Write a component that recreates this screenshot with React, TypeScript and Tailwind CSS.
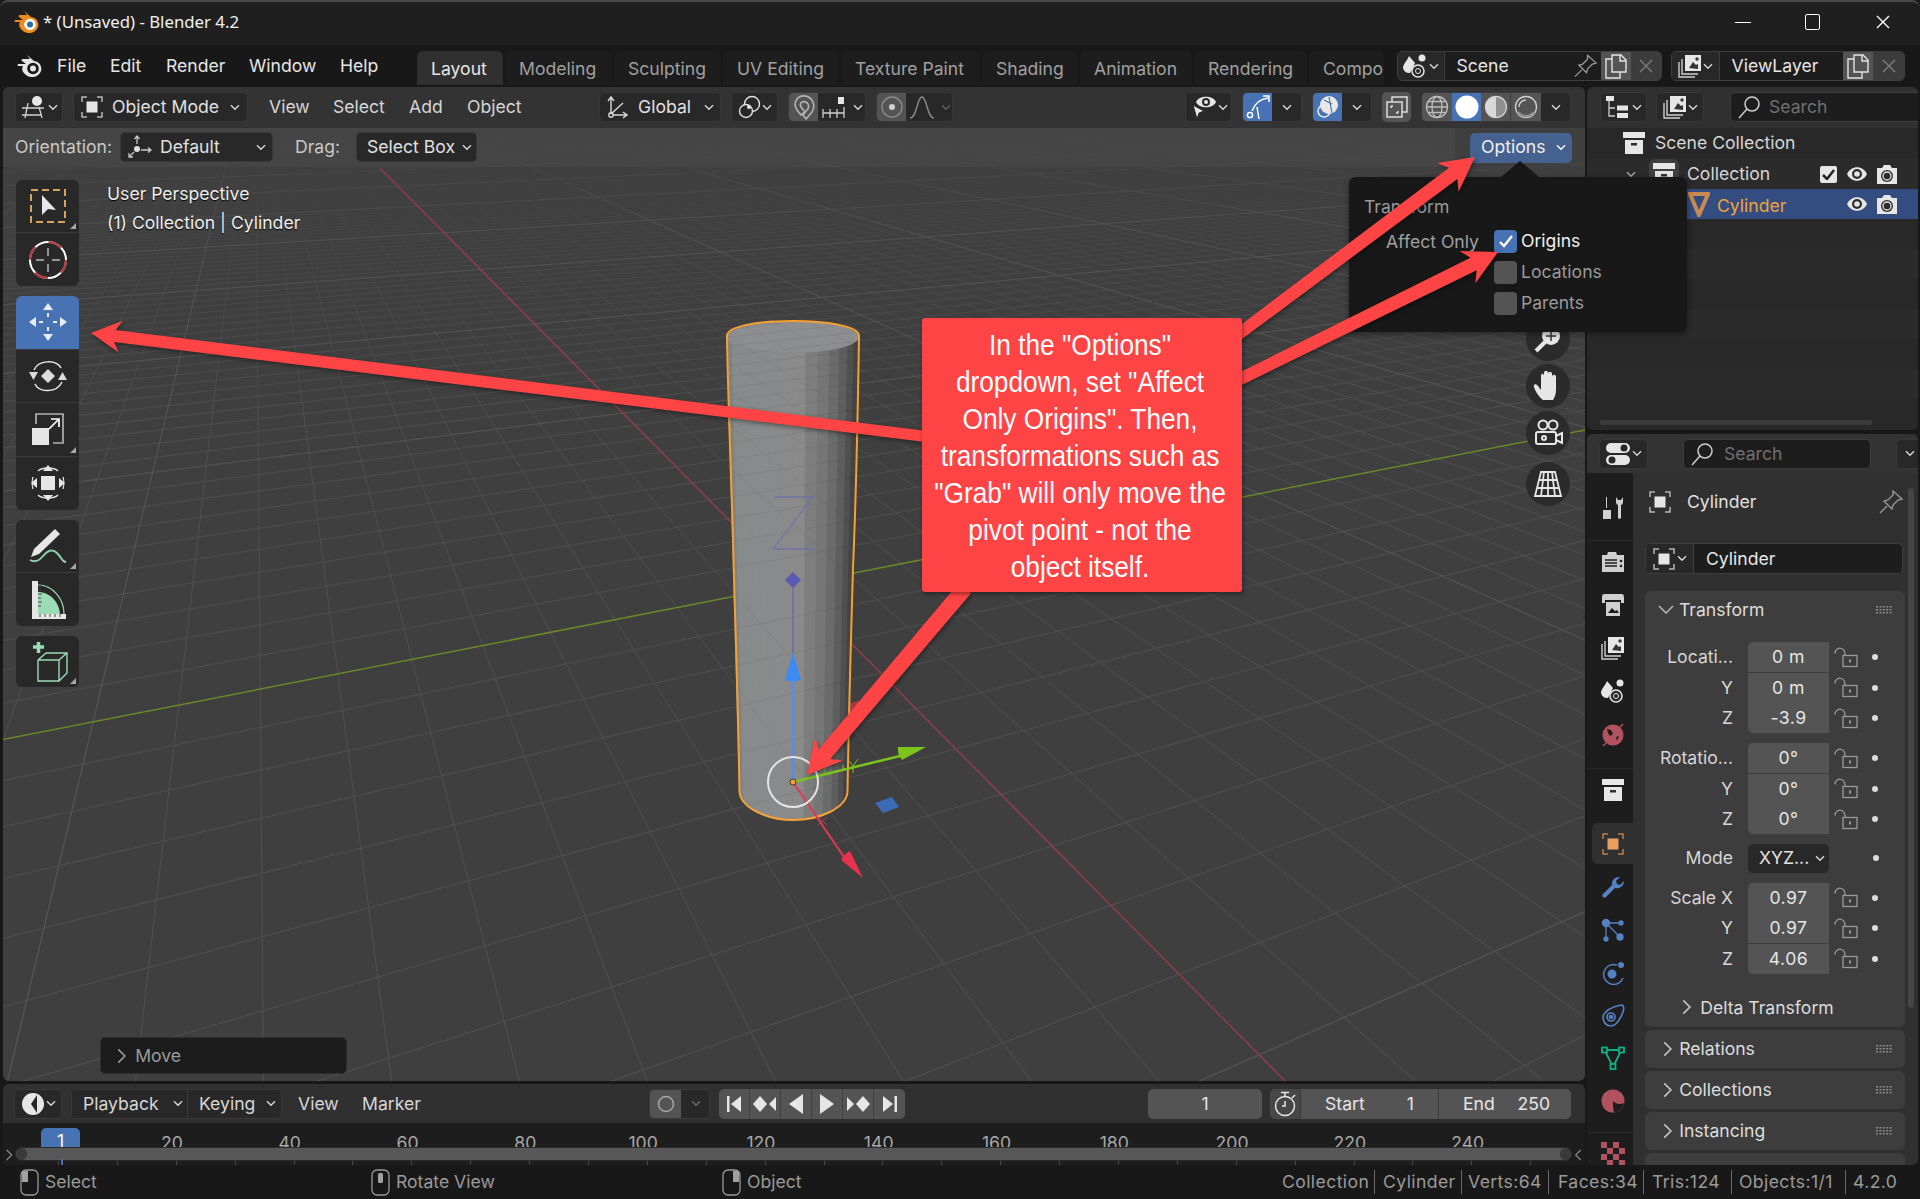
import React from 'react';

const VX = [255, 43], VY = [3563, 43], O = [794, 585], A = 0.0464, B = 0.0202;
const proj = (X: number, Y: number) => {
  const w = 1 + A * X + B * Y;
  return [(A * X * VX[0] + B * Y * VY[0] + O[0]) / w, (A * X * VX[1] + B * Y * VY[1] + O[1]) / w];
};
const lineY = (Y: number) => {
  const p = proj((0.03 - 1 - B * Y) / A, Y), q = proj((60 - 1 - B * Y) / A, Y);
  return `M${p[0].toFixed(1)} ${p[1].toFixed(1)}L${q[0].toFixed(1)} ${q[1].toFixed(1)}`;
};
const lineX = (X: number) => {
  const p = proj(X, (0.03 - 1 - A * X) / B), q = proj(X, (60 - 1 - A * X) / B);
  return `M${p[0].toFixed(1)} ${p[1].toFixed(1)}L${q[0].toFixed(1)} ${q[1].toFixed(1)}`;
};
const gridPath = (step: number, n: number) => {
  let s = '';
  for (let i = -n; i <= n; i += step) {
    if (i === 0) continue;
    s += lineY(i) + lineX(i);
  }
  return s;
};
const GRID1 = gridPath(1, 300);
const GRID10 = gridPath(10, 1200);

const shades = ['#747676', '#808383', '#888b8b', '#888b8b', '#888b8b', '#888b8b', '#888b8b', '#8a8a8a', '#8a8a8a', '#7e7e7e', '#767676', '#6a6c6c', '#5e5e5e', '#505050', '#454345', '#444444'];
const facet = (i: number) => {
  const t0 = Math.PI - (i / 16) * Math.PI, t1 = Math.PI - ((i + 1) / 16) * Math.PI;
  const a = [793 + 66 * Math.cos(t0), 337 + 16 * Math.sin(t0)], b = [793 + 66 * Math.cos(t1), 337 + 16 * Math.sin(t1)];
  const c = [793.5 + 54 * Math.cos(t1), 792 + 28 * Math.sin(t1)], d = [793.5 + 54 * Math.cos(t0), 792 + 28 * Math.sin(t0)];
  return [a, b, c, d].map((p) => p.map((v) => v.toFixed(1)).join(',')).join(' ');
};
const CYL = 'M727 336C727 326 760 321 793 321C826 321 859 326 859 336C858 400 856 500 853 568C851 640 849 700 847.5 792C846 808 820 820 793 820C768 820 741 808 739.5 792C738 700 735 618 733 540C731 470 728 400 727 336Z';

const arrow = (x0: number, y0: number, x1: number, y1: number, w0: number, w1: number, hl: number, hw: number) => {
  const dx = x1 - x0, dy = y1 - y0, l = Math.hypot(dx, dy), ux = dx / l, uy = dy / l, nx = -uy, ny = ux;
  const at = (back: number, off: number) => `${(x1 - ux * back + nx * off).toFixed(1)},${(y1 - uy * back + ny * off).toFixed(1)}`;
  const st = (off: number) => `${(x0 + nx * off).toFixed(1)},${(y0 + ny * off).toFixed(1)}`;
  return [st(w0 / 2), at(hl * 0.8, w1 / 2), at(hl, hw / 2), `${x1},${y1}`, at(hl, -hw / 2), at(hl * 0.8, -w1 / 2), st(-w0 / 2)].join(' ');
};

const L = '#e6e6e6';
const Chev = ({ c = '#d8d8d8' }: { c?: string }) => (
  <svg width="10" height="7" viewBox="0 0 10 7" className="shrink-0"><path d="M1 1.2l4 4 4-4" fill="none" stroke={c} strokeWidth="1.4" /></svg>
);
const ChevR = ({ c = '#c4c4c4', s = 12 }: { c?: string; s?: number }) => (
  <svg width={s * 0.7} height={s} viewBox="0 0 7 12"><path d="M1 1l5 5-5 5" fill="none" stroke={c} strokeWidth="1.2" /></svg>
);
const ObjI = ({ s = 24, c = L, b = '#b5b5b5' }: { s?: number; c?: string; b?: string }) => (
  <svg width={s} height={s} viewBox="0 0 24 24" className="shrink-0">
    <rect x="6.5" y="6.5" width="11" height="11" fill={c} />
    <path d="M2 7V2h5M17 2h5v5M22 17v5h-5M7 22H2v-5" fill="none" stroke={b} strokeWidth="1.5" />
  </svg>
);
const View3DI = () => (
  <svg width="28" height="24" viewBox="0 0 28 24"><circle cx="17" cy="6" r="5" fill={L} /><path d="M2 13h22M2 20h20M8 8l-3 15M19 12l3 11" stroke="#cfcfcf" strokeWidth="1.3" fill="none" /></svg>
);
const GlobalI = () => (
  <svg width="24" height="24" viewBox="0 0 24 24" fill="none" stroke="#d8d8d8" strokeWidth="1.4"><path d="M5 19V3M2 6l3-4 3 4M5 19L17 8M7 20h13M17 17l4 3-4 3" /><circle cx="5" cy="20" r="2.2" /></svg>
);
const LinkI = () => (
  <svg width="24" height="24" viewBox="0 0 24 24" fill="none" stroke="#e0e0e0" strokeWidth="1.4"><circle cx="15" cy="9" r="7.5" /><circle cx="9" cy="16" r="6.5" fill="#282828" /><circle cx="12" cy="12" r="2" fill={L} stroke="none" /></svg>
);
const MagnetI = () => (
  <svg width="24" height="26" viewBox="0 0 24 26" fill="none" stroke="#b4b4b4" strokeWidth="1.600" strokeLinejoin="round"><path d="M14 25l6-7c3-5 2-11-2-14S8 1 5 5s-2 8 0 11l4 5 4-3-4-5c-1-2-1-4 1-5s5 0 6 2 1 4-1 6l-4 5z" /></svg>
);
const SnapI = () => (
  <svg width="26" height="24" viewBox="0 0 26 24"><rect x="17" y="2" width="6" height="7" fill={L} /><path d="M2 14v9M9 14v9M16 14v9M23 12v11M2 18h21" stroke="#cfcfcf" strokeWidth="1.3" fill="none" /></svg>
);
const PropI = () => (
  <svg width="24" height="24" viewBox="0 0 24 24" fill="none"><circle cx="12" cy="12" r="10" stroke="#8a8a8a" strokeWidth="1.4" /><circle cx="12" cy="12" r="3" fill="#cfcfcf" /></svg>
);
const FalloffI = () => (
  <svg width="26" height="24" viewBox="0 0 26 24" fill="none" stroke="#8c8c8c" strokeWidth="1.4"><path d="M1 23c7 0 7-21 12-21s5 21 12 21" /></svg>
);
const VisI = () => (
  <svg width="28" height="28" viewBox="0 0 28 28"><path d="M6 9c3-7 17-7 20 0-3 7-17 7-20 0z" fill={L} /><circle cx="16" cy="9" r="4" fill="#282828" /><circle cx="16" cy="9" r="2" fill={L} /><path d="M3 12l11 6-5 2-2 6z" fill={L} stroke="#282828" /></svg>
);
const GizmoI = () => (
  <svg width="26" height="26" viewBox="0 0 26 26" fill="none" stroke="#fff" strokeWidth="1.5"><path d="M7 17C10 9 15 5 23 4M18 2h6v6" /><circle cx="5" cy="21" r="2.6" /><path d="M12 13l2 12" /></svg>
);
const OverlayI = () => (
  <svg width="26" height="26" viewBox="0 0 26 26"><circle cx="14" cy="11" r="9" fill="#e8e8e8" /><circle cx="9" cy="17" r="6" fill="none" stroke="#e8e8e8" strokeWidth="1.6" /><path d="M14 3l3 16M9 6l8 4" stroke="#4772b3" strokeWidth="1.2" /></svg>
);
const XrayI = () => (
  <svg width="24" height="24" viewBox="0 0 24 24" fill="none" stroke="#dcdcdc" strokeWidth="1.5"><rect x="2" y="7" width="15" height="15" /><path d="M7 7V2h15v15h-5" /><path d="M6 11v2M6 11h2M13 18h-2M13 18v-2" /></svg>
);
const ShadeI = ({ k }: { k: number }) => (
  <svg width="24" height="24" viewBox="0 0 24 24" fill="none">
    {k === 0 && <g stroke="#bdbdbd" strokeWidth="1.3"><circle cx="12" cy="12" r="10.5" /><ellipse cx="12" cy="12" rx="5" ry="10.5" /><path d="M1.5 12h21M3 6.5h18M3 17.5h18" /></g>}
    {k === 1 && <circle cx="12" cy="12" r="11.5" fill="#fff" />}
    {k === 2 && <g><circle cx="12" cy="12" r="10.5" fill="#8f8f8f" stroke="#d0d0d0" strokeWidth="1.3" /><path d="M12 1.5a10.5 10.5 0 0 0 0 21z" fill="#d8d8d8" /></g>}
    {k === 3 && <g><circle cx="12" cy="12" r="10.5" stroke="#cfcfcf" strokeWidth="1.3" /><path d="M5 12a7 7 0 0 1 7-7" stroke="#cfcfcf" strokeWidth="1.5" /><path d="M4 17a10 10 0 0 0 16 0" stroke="#8f8f8f" strokeWidth="2.5" /></g>}
  </svg>
);
const OrientI = () => (
  <svg width="26" height="26" viewBox="0 0 26 26" fill="none" stroke="#c8c8c8" strokeWidth="1.3"><circle cx="10" cy="15" r="3" fill="#e0e0e0" stroke="none" /><path d="M10 10V2M7.5 5L10 2l2.500 3M14 16h10M21 13.500l3 2.500-3 2.500M7 18l-5 5M2 19v4h4" /></svg>
);
const OutlinerI = () => (
  <svg width="26" height="24" viewBox="0 0 26 24"><rect x="1" y="1" width="8" height="5" fill={L} /><path d="M4 6v15h6M4 13h6" stroke="#cfcfcf" strokeWidth="1.3" fill="none" /><rect x="12" y="10.500" width="11" height="5" fill={L} /><rect x="12" y="18" width="11" height="5" fill={L} /></svg>
);
const LayerI = () => (
  <svg width="24" height="24" viewBox="0 0 24 24" fill="none"><rect x="7" y="1" width="16" height="16" fill={L} /><path d="M11 14l4-6 3 3 2-1v5z" fill="#333" /><circle cx="19" cy="5" r="1.700" fill="#333" /><path d="M4 5v15h16M1 8v15h16" stroke="#cfcfcf" strokeWidth="1.4" /></svg>
);
const SearchI = () => (
  <svg width="24" height="24" viewBox="0 0 24 24" fill="none" stroke="#cfcfcf" strokeWidth="1.5"><circle cx="15" cy="9" r="7" /><path d="M10 14L2 23" /></svg>
);
const SceneI = () => (
  <svg width="26" height="26" viewBox="0 0 26 26"><path d="M7 3c-2 5-6 8-6 12a6 6 0 0 0 7 5l5-10z" fill={L} /><circle cx="20" cy="5" r="3.500" fill={L} /><circle cx="16" cy="18" r="6" fill="#282828" stroke={L} strokeWidth="1.500" /><circle cx="16" cy="18" r="2.500" fill="none" stroke={L} /></svg>
);
const PinI = ({ c = '#9a9a9a' }: { c?: string }) => (
  <svg width="24" height="24" viewBox="0 0 24 24" fill="none" stroke={c} strokeWidth="1.3"><path d="M14 1l9 8-4 1-5 5-1 4-8-8 4-1 5-5zM8 16l-7 7" /></svg>
);
const CopyI = () => (
  <svg width="22" height="26" viewBox="0 0 22 26" fill="none" stroke="#e4e4e4" strokeWidth="1.4"><path d="M7 19V2h9l5 5v12zM15 2v6h6M7 6H1v19h14v-6" /></svg>
);
const XI = ({ c = '#7d7d7d' }: { c?: string }) => (
  <svg width="14" height="14" viewBox="0 0 14 14" fill="none" stroke={c} strokeWidth="1.4"><path d="M1 1l12 12M13 1L1 13" /></svg>
);
const ArchiveI = ({ s = 24 }: { s?: number }) => (
  <svg width={s} height={s} viewBox="0 0 24 24"><rect x="1" y="1" width="22" height="6" fill={L} /><path d="M3 9h18v14H3z" fill={L} /><rect x="9" y="12" width="6" height="2.500" fill="#2c2c2c" /></svg>
);
const EyeI = () => (
  <svg width="22" height="16" viewBox="0 0 22 16"><path d="M1 8c4-9 16-9 20 0-4 9-16 9-20 0z" fill={L} /><circle cx="11" cy="8" r="5" fill="#2c2c2c" /><circle cx="11" cy="8" r="2.800" fill={L} /></svg>
);
const CamI = () => (
  <svg width="22" height="22" viewBox="0 0 22 22"><path d="M1 5h5l2-3h6l2 3h5v16H1z" fill={L} /><circle cx="11" cy="13" r="6" fill="#2c2c2c" /><circle cx="11" cy="13" r="4" fill="none" stroke={L} strokeWidth="1.300" /></svg>
);
const MeshTri = () => (
  <svg width="22" height="26" viewBox="0 0 22 26"><path d="M2 3h18L11 24z" fill="#334d80" stroke="#c98a50" strokeWidth="4" /></svg>
);
const LockI = () => (
  <svg width="24" height="21" viewBox="0 0 24 21" fill="none" stroke="#9a9a9a" strokeWidth="1.3" className="shrink-0"><path d="M1 6.500C1 2 5 .5 7.500 1.500S11 5 11 8" /><rect x="9" y="8.500" width="14" height="11" /><rect x="15" y="12.500" width="2" height="3" fill="#9a9a9a" stroke="none" /></svg>
);
const Dots = () => (
  <svg width="16" height="8" viewBox="0 0 16 8" className="shrink-0"><g fill="#8a8a8a">{[0, 3.4, 6.8, 10.2, 13.6].flatMap((x) => [0, 3, 6].map((y) => <rect key={`${x}-${y}`} x={x} y={y} width="2" height="1.500" />))}</g></svg>
);
const Corner = () => (
  <svg width="6" height="6" viewBox="0 0 6 6" className="absolute right-[3px] bottom-[3px]"><path d="M6 0v6H0z" fill="#a8a8a8" /></svg>
);
const Logo = ({ c = L, inner = '#181818', dot = L }: { c?: string; inner?: string; dot?: string }) => (
  <svg width="26" height="24" viewBox="0 0 26 24"><path d="M10 1l7 6C24 8 25 14 24 17c-2 6-10 8-15 4S5 14 6 12L1 12c-1-1 0-2 1-2h7L5 7c-1-1 0-2 1-2h7z" fill={c} /><circle cx="16" cy="14.500" r="5.800" fill={inner} /><circle cx="16" cy="14.500" r="3" fill={dot} /></svg>
);
const ClockI = () => (
  <svg width="24" height="24" viewBox="0 0 24 24"><circle cx="12" cy="12" r="11" fill={L} /><path d="M16 3l-6 9 6 9z" fill="#282828" /></svg>
);
const Mouse = ({ k }: { k: number }) => (
  <svg width="20" height="27" viewBox="0 0 20 27" fill="none"><rect x="1" y="1" width="17" height="25" rx="5" stroke="#9a9a9a" strokeWidth="1.300" />
    {k === 0 && <path d="M2 2h6v11H2z" fill="#a0a0a0" />}{k === 1 && <rect x="7" y="4" width="5" height="10" rx="1.500" fill="#a0a0a0" />}{k === 2 && <path d="M11 2h6v11h-6z" fill="#a0a0a0" />}
  </svg>
);

const tabs: [string, string][] = [['Modeling', 'w-[107px]'], ['Sculpting', 'w-[107px]'], ['UV Editing', 'w-[116px]'], ['Texture Paint', 'w-[139px]'], ['Shading', 'w-[96px]'], ['Animation', 'w-[112px]'], ['Rendering', 'w-[113px]']];

function TitleBar() {
  return (
    <div className="h-[45px] shrink-0 bg-[#1f1f1f] border-t-2 border-[#4a4a4a] rounded-t-[8px] flex items-center pb-[3px] text-[16.800px] text-[#f0f0f0] [font-family:'Noto_Sans',sans-serif]">
      <div className="ml-[14px] w-[29px]"><Logo c="#f08a1d" inner="#fff" dot="#2a6ca8" /></div>
      <span>* (Unsaved) - Blender 4.2</span>
      <div className="ml-auto flex items-center">
        <div className="w-[68px] flex justify-center"><div className="w-[16px] h-px bg-white" /></div>
        <div className="w-[70px] flex justify-center"><div className="w-[15px] h-[16px] border-[1.5px] border-white rounded-[2px]" /></div>
        <div className="w-[72px] flex justify-center"><XI c="#fff" /></div>
        <div className="w-[1px]" />
      </div>
    </div>
  );
}

function MenuBar() {
  return (
    <div className="h-[42px] shrink-0 bg-[#181818] flex items-center text-[#e6e6e6]">
      <div className="w-[57px] pl-[17px]"><Logo /></div>
      <span className="w-[53px]">File</span>
      <span className="w-[56px]">Edit</span>
      <span className="w-[83px]">Render</span>
      <span className="w-[91px]">Window</span>
      <span className="w-[77px]">Help</span>
      <div className="self-end h-[34px] flex gap-[2px] mb-[2px]">
        <div className="w-[86px] pl-[14px] pt-[2px] bg-[#303030] rounded-t-[6px] flex items-center">Layout</div>
        {tabs.map(([t, w]) => (
          <div key={t} className={w + ' pl-[14px] pt-[2px] bg-[#1d1d1d] rounded-t-[6px] flex items-center text-[#a0a0a0]'}>{t}</div>
        ))}
        <div className="w-[75px] pl-[14px] pt-[2px] bg-[#1d1d1d] rounded-t-[6px] flex items-center text-[#a0a0a0] overflow-hidden">Compo</div>
      </div>
      <div className="ml-[13px] w-[265px] h-[30px] flex items-center rounded-[5px] border border-[#3d3d3d] bg-[#1d1d1d] overflow-hidden">
        <div className="w-[48px] h-full flex items-center justify-center gap-[1px] bg-[#282828] border-r border-[#3d3d3d]"><SceneI /><Chev /></div>
        <span className="ml-[12px] w-[121px]">Scene</span>
        <PinI />
        <div className="ml-[4px] w-[31px] h-full bg-[#545454] flex items-center justify-center"><CopyI /></div>
        <div className="w-[31px] h-full bg-[#3c3c3c] flex items-center justify-center"><XI /></div>
      </div>
      <div className="ml-[9px] w-[234px] h-[30px] flex items-center rounded-[5px] border border-[#3d3d3d] bg-[#1d1d1d] overflow-hidden">
        <div className="w-[48px] h-full flex items-center justify-center gap-[1px] bg-[#282828] border-r border-[#3d3d3d]"><LayerI /><Chev /></div>
        <span className="ml-[12px] w-[112px]">ViewLayer</span>
        <div className="w-[31px] h-full bg-[#545454] flex items-center justify-center"><CopyI /></div>
        <div className="w-[31px] h-full bg-[#3c3c3c] flex items-center justify-center"><XI /></div>
      </div>
    </div>
  );
}

const btn = 'h-[30px] flex items-center rounded-[5px] bg-[#282828] border border-[#383838] shrink-0';

function ViewportHeader() {
  return (
    <div className="h-[41px] shrink-0 bg-[#333333] flex items-center pl-[12px] pb-[1px] text-[#d6d6d6] relative">
      <div className={btn + ' w-[48px] justify-center'}><View3DI /><Chev /></div>
      <div className={btn + ' ml-[10px] w-[175px] pl-[6px]'}><ObjI /><span className="ml-[8px] text-[#e0e0e0] whitespace-nowrap">Object Mode</span><span className="ml-auto mr-[7px]"><Chev /></span></div>
      <span className="ml-[21px] w-[64px]">View</span>
      <span className="w-[76px]">Select</span>
      <span className="w-[58px]">Add</span>
      <span className="w-[132px]">Object</span>
      <div className={btn + ' w-[122px] pl-[6px]'}><GlobalI /><span className="ml-[8px] text-[#e0e0e0]">Global</span><span className="ml-auto mr-[6px]"><Chev /></span></div>
      <div className={btn + ' ml-[10px] w-[47px] justify-center gap-[1px]'}><LinkI /><Chev /></div>
      <div className={btn + ' ml-[10px] w-[78px] overflow-hidden'}><div className="w-[29px] h-full bg-[#545454] flex items-center justify-center"><MagnetI /></div><div className="ml-[3px]"><SnapI /></div><span className="ml-[6px]"><Chev /></span></div>
      <div className={btn + ' ml-[10px] w-[77px] overflow-hidden'}><div className="w-[29px] h-full bg-[#545454] flex items-center justify-center"><PropI /></div><div className="ml-[3px]"><FalloffI /></div><span className="ml-[6px]"><Chev c="#5d5d5d" /></span></div>
      <div className={btn + ' ml-[232px] w-[47px] justify-center'}><VisI /><Chev /></div>
      <div className={btn + ' ml-[10px] w-[60px] overflow-hidden'}><div className="w-[29px] h-full bg-[#4772b3] flex items-center justify-center"><GizmoI /></div><span className="ml-[10px]"><Chev /></span></div>
      <div className={btn + ' ml-[10px] w-[60px] overflow-hidden'}><div className="w-[29px] h-full bg-[#4772b3] flex items-center justify-center"><OverlayI /></div><span className="ml-[10px]"><Chev /></span></div>
      <div className="ml-[10px] w-[29px] h-[30px] rounded-[5px] bg-[#545454] flex items-center justify-center"><XrayI /></div>
      <div className={btn + ' ml-[10px] w-[150px] overflow-hidden'}>
        <div className="w-[30px] h-full bg-[#545454] flex items-center justify-center"><ShadeI k={0} /></div>
        <div className="w-[29px] h-full bg-[#4772b3] flex items-center justify-center"><ShadeI k={1} /></div>
        <div className="w-[30px] h-full bg-[#545454] flex items-center justify-center border-r border-[#3d3d3d]"><ShadeI k={2} /></div>
        <div className="w-[30px] h-full bg-[#545454] flex items-center justify-center"><ShadeI k={3} /></div>
        <span className="ml-[10px]"><Chev /></span>
      </div>
    </div>
  );
}

function ToolSettings() {
  return (
    <div className="h-[39px] shrink-0 flex items-center">
      <div className="w-[1452px] h-full bg-[#ffffff08] rounded-br-[8px] flex items-center pl-[12px] pb-[1px]">
        <span className="w-[105px] text-[#c8c8c8]">Orientation:</span>
        <div className={btn + ' w-[153px] pl-[6px]'}><OrientI /><span className="ml-[7px] text-[#e0e0e0]">Default</span><span className="ml-auto mr-[6px]"><Chev /></span></div>
        <span className="ml-[22px] w-[61px] text-[#c8c8c8]">Drag:</span>
        <div className={btn + ' w-[121px] pl-[10px] bg-[#2a2a2a]'}><span className="text-[#e0e0e0] whitespace-nowrap">Select Box</span><span className="ml-auto mr-[4px]"><Chev /></span></div>
      </div>
      <div className="ml-[15px] w-[102px] h-[30px] rounded-[5px] bg-[#44618f] flex items-center pl-[11px] pb-[1px] text-[#f0f0f0]">Options<span className="ml-auto mr-[6px]"><Chev c="#fff" /></span></div>
    </div>
  );
}

const Tool = ({ children, active, corner, cls }: { children: React.ReactNode; active?: boolean; corner?: boolean; cls: string }) => (
  <div className={'relative flex items-center justify-center border-b border-[#3a3a3a] last:border-b-0 ' + cls + (active ? ' bg-[#4772b3]' : ' bg-[#282828]')}>
    {children}
    {corner && <Corner />}
  </div>
);

function Tools() {
  return (
    <div className="ml-[13px] mt-[13px] w-[63px] flex flex-col gap-[10px] shrink-0">
      <div className="rounded-[6px] overflow-hidden">
        <Tool cls="h-[53px]" corner>
          <svg width="40" height="40" viewBox="0 0 40 40" fill="none"><rect x="3" y="4" width="34" height="32" stroke="#d3a65c" strokeWidth="2" strokeDasharray="7 4" /><path d="M14 9l14 15-8-1-6 6z" fill={L} /></svg>
        </Tool>
        <Tool cls="h-[53px]">
          <svg width="40" height="40" viewBox="0 0 40 40" fill="none"><circle cx="20" cy="20" r="18" stroke="#fff" strokeWidth="2" /><circle cx="20" cy="20" r="18" stroke="#b03a3f" strokeWidth="2.200" strokeDasharray="14 14.300" /><path d="M20 8v8M20 24v8M8 20h8M24 20h8" stroke="#b8b8b8" strokeWidth="1.500" /></svg>
        </Tool>
      </div>
      <div className="rounded-[6px] overflow-hidden">
        <Tool cls="h-[53.500px]" active>
          <svg width="40" height="40" viewBox="0 0 40 40" fill="#e8ecf4"><path d="M20 1l5 7H15zM20 39l-5-7h10zM1 20l7-5v10zM39 20l-7 5V15z" /><path d="M20 11v4M20 25v4M11 20h4M25 20h4" stroke="#e8ecf4" strokeWidth="2" /></svg>
        </Tool>
        <Tool cls="h-[53.500px]">
          <svg width="40" height="36" viewBox="0 0 40 36" fill="none"><path d="M6 12C10 2 28 1 33 10M34 24C29 35 11 35 7 26" stroke={L} strokeWidth="1.500" /><path d="M20 11l7 7-7 7-7-7zM1 14h9l-4.500 8zM30 22h9l-4.500-8z" fill="#dcdcdc" /></svg>
        </Tool>
        <Tool cls="h-[53.500px]" corner>
          <svg width="34" height="34" viewBox="0 0 34 34" fill="none"><rect x="1" y="16" width="17" height="17" fill={L} /><path d="M5 12V2h27v29H22" stroke="#b0b0b0" strokeWidth="1.700" /><path d="M18 17l9-9M20 7h8v8" stroke="#fff" strokeWidth="1.700" /></svg>
        </Tool>
        <Tool cls="h-[53.500px]">
          <svg width="36" height="38" viewBox="0 0 36 38" fill="none"><rect x="11" y="12" width="14" height="14" fill={L} /><path d="M18 1l5 6H13zM18 37l-5-6h10zM1 19l6-5v10zM35 19l-6 5V14z" fill={L} /><path d="M8 7C12 3 24 3 28 7M8 31C12 35 24 35 28 31M3 13c-1 3-1 9 0 12M33 13c1 3 1 9 0 12" stroke={L} strokeWidth="1.300" /></svg>
        </Tool>
      </div>
      <div className="rounded-[6px] overflow-hidden">
        <Tool cls="h-[53px]" corner>
          <svg width="42" height="38" viewBox="0 0 42 38" fill="none"><path d="M28 2l5 5-21 20-8 3 3-8z" fill={L} /><path d="M3 33c5 3 9 1 13-4s9-8 14-3 5 9 9 9" stroke="#8fd0a8" strokeWidth="2" /></svg>
        </Tool>
        <Tool cls="h-[53px]">
          <svg width="36" height="40" viewBox="0 0 36 40" fill="none"><path d="M8 12c12 0 21 10 22 22H8z" fill="#9bdcb4" /><path d="M8 5c15 0 26 14 26 29" stroke="#9bdcb4" strokeWidth="1.200" /><path d="M2 1h6v38H2zM2 34h34v5H2z" fill={L} /><path d="M8 6h4M8 10h3M8 14h4M8 18h3M8 22h4M8 26h3M10 34v3M15 34v3M20 34v3M25 34v3M30 34v3" stroke="#444" /></svg>
        </Tool>
      </div>
      <div className="rounded-[6px] overflow-hidden">
        <Tool cls="h-[51px]" corner>
          <svg width="42" height="42" viewBox="0 0 42 42" fill="none"><path d="M6 6h11M11.500 1v11" stroke="#9bdcb4" strokeWidth="3.500" /><path d="M11 19l8-7h21v20l-8 8H11zM11 19h21v21M32 19l8-7" stroke="#9bdcb4" strokeWidth="1.400" /></svg>
        </Tool>
      </div>
    </div>
  );
}

function Scene3D() {
  return (
    <svg className="absolute inset-0 w-full h-full" viewBox="3 87 1582 994" fill="none" preserveAspectRatio="none">
      <defs>
        <linearGradient id="g1" gradientUnits="userSpaceOnUse" x1="0" y1="87" x2="0" y2="1082">
          <stop offset="0.08" stopColor="#4d4d4d" stopOpacity="0" />
          <stop offset="0.18" stopColor="#4d4d4d" stopOpacity="0.55" />
          <stop offset="0.32" stopColor="#4e4e4e" stopOpacity="0.95" />
          <stop offset="1" stopColor="#515151" stopOpacity="1" />
        </linearGradient>
        <linearGradient id="g10" gradientUnits="userSpaceOnUse" x1="0" y1="87" x2="0" y2="1082">
          <stop offset="0.05" stopColor="#555555" stopOpacity="0" />
          <stop offset="0.14" stopColor="#555555" stopOpacity="0.7" />
          <stop offset="1" stopColor="#555555" stopOpacity="1" />
        </linearGradient>
        <clipPath id="cyl"><path d={CYL} /></clipPath>
      </defs>
      <path d={GRID1} stroke="url(#g1)" strokeWidth="1" />
      <path d={GRID10} stroke="url(#g10)" strokeWidth="1" />
      <path d="M380 168L1286 1082" stroke="#8f3d47" strokeWidth="1.500" />
      <path d="M0 740L1590 429" stroke="#68892a" strokeWidth="1.500" />
      <path d="M848 704L868 698L848 720z" fill="#a83c4a" />
      {shades.map((c, i) => <polygon key={i} points={facet(i)} fill={c} stroke={c} strokeWidth="1" />)}
      <ellipse cx="793" cy="337" rx="66" ry="16" fill="#8d8e8f" />
      <path d={GRID1} stroke="#000" strokeOpacity="0.06" clipPath="url(#cyl)" />
      <path d={CYL} stroke="#f5a033" strokeWidth="2" />
      <path d="M774 497h39L773 549h40" stroke="#6767b8" strokeWidth="1" />
      <path d="M785 580l8-8 8 8-8 8z" fill="#5a5ab4" />
      <path d="M793 588V652" stroke="#6060a8" strokeWidth="1" />
      <path d="M793 652l8 28q-8 3-16 0z" fill="#3d8bf0" />
      <path d="M793 680V780" stroke="#4d8ff5" strokeWidth="2.500" />
      <path d="M793 782L900 756" stroke="#7cc31c" strokeWidth="2.500" />
      <path d="M898 747L926 747L902 760q-5-6-4-13z" fill="#7cc31c" />
      <path d="M849 761l4 5 5-7M853 766v7M825 768v6M843 765v6" stroke="#7cc31c" strokeWidth="1" />
      <path d="M793 782L846 860" stroke="#e5384f" strokeWidth="2" />
      <path d="M863 878L841 860q3-6 9-9z" fill="#e8304f" />
      <path d="M818 825l9-8M818 817l9 8" stroke="#a8485a" />
      <path d="M875 803L892 797L899 807L883 813z" fill="#3a6cb5" />
      <circle cx="793" cy="782" r="25" stroke="#e4e4e4" strokeWidth="2" />
      <circle cx="793" cy="782" r="3" fill="#f5a033" stroke="#222" strokeWidth="0.800" />
    </svg>
  );
}

const Nav = ({ children, cls }: { children: React.ReactNode; cls: string }) => (
  <div className={'w-[44px] h-[44px] rounded-full bg-[#2b2b2b] flex items-center justify-center ' + cls}>{children}</div>
);

function Viewport() {
  return (
    <div className="relative flex-1 min-h-0 rounded-[6px] overflow-hidden bg-[#3f3f3f] flex flex-col">
      <Scene3D />
      <div className="relative flex flex-col flex-1 min-h-0">
        <ViewportHeader />
        <ToolSettings />
        <div className="flex">
          <Tools />
          <div className="ml-[28px] mt-[12px] text-[#f0f0f0] [text-shadow:0_1px_1px_#000] leading-[29px]">
            <div>User Perspective</div>
            <div>(1) Collection | Cylinder</div>
          </div>
        </div>
        <div className="absolute right-[15px] top-[230px] flex flex-col gap-[3px]">
          <Nav cls=""><svg width="30" height="30" viewBox="0 0 30 30"><circle cx="18" cy="12" r="9" fill={L} /><path d="M12 18L3 27" stroke={L} strokeWidth="4" /><path d="M18 7v10M13 12h10" stroke="#333" strokeWidth="1.500" /></svg></Nav>
          <Nav cls=""><svg width="30" height="32" viewBox="0 0 30 32" fill={L}><path d="M10 30c-4-3-8-9-9-13-1-3 2-4 4-1l3 4V6c0-3 3-3 3 0v6V3c0-3 4-3 4 0v9V4c0-3 4-3 4 0v9-6c0-3 4-3 4 0v13c0 5-2 8-3 10z" /></svg></Nav>
          <Nav cls=""><svg width="30" height="28" viewBox="0 0 30 28" fill="none" stroke={L} strokeWidth="2"><circle cx="10" cy="6" r="4.500" /><circle cx="20" cy="6" r="4.500" /><rect x="3" y="13" width="20" height="12" rx="2" /><path d="M23 17l6-3v10l-6-3" /><circle cx="11" cy="19" r="2" /></svg></Nav>
          <Nav cls="mt-[4px]"><svg width="30" height="28" viewBox="0 0 30 28" fill="none" stroke={L} strokeWidth="1.800"><path d="M8 2h14l6 24H2zM5.500 10h19M3.500 18h23M15 2v24M11 2L8 26M19 2l3 24" /></svg></Nav>
        </div>
        <div className="absolute left-[97px] bottom-[7px] w-[247px] h-[37px] rounded-[5px] bg-[#1c1c1c] border border-[#2e2e2e] flex items-center pl-[15px] text-[#9a9a9a]">
          <ChevR c="#9a9a9a" s={16} /><span className="ml-[8px]">Move</span>
        </div>
      </div>
    </div>
  );
}

const Cell = ({ children, w = 'w-[31px]' }: { children: React.ReactNode; w?: string }) => (
  <div className={w + ' h-full bg-[#545454] flex items-center justify-center border-r border-[#404040] last:border-r-0'}>{children}</div>
);

function Timeline() {
  const nums = [20, 40, 60, 80, 100, 120, 140, 160, 180, 200, 220, 240];
  return (
    <div className="h-[81px] shrink-0 mt-[3px] flex flex-col">
      <div className="h-[39px] bg-[#303030] rounded-t-[6px] flex items-center pl-[11px] text-[#d6d6d6]">
        <div className={btn + ' w-[48px] justify-center gap-[1px]'}><ClockI /><Chev /></div>
        <div className={btn + ' ml-[9px] w-[211px]'}>
          <div className="w-[116px] h-full flex items-center pl-[11px] border-r border-[#3d3d3d]">Playback<span className="ml-auto mr-[4px]"><Chev /></span></div>
          <div className="flex-1 h-full flex items-center pl-[11px]">Keying<span className="ml-auto mr-[5px]"><Chev /></span></div>
        </div>
        <span className="ml-[16px] w-[64px]">View</span>
        <span className="w-[287px]">Marker</span>
        <div className={btn + ' w-[61px] overflow-hidden'}>
          <div className="w-[31px] h-full bg-[#545454] flex items-center justify-center"><svg width="18" height="18" viewBox="0 0 18 18" fill="none"><circle cx="9" cy="9" r="7.500" stroke="#a8a8a8" strokeWidth="1.500" /></svg></div>
          <span className="ml-[10px]"><Chev c="#6a6a6a" /></span>
        </div>
        <div className="ml-[9px] w-[186px] h-[30px] rounded-[5px] overflow-hidden flex">
          <Cell><svg width="16" height="18" viewBox="0 0 16 18" fill={L}><rect x="1" y="1" width="2.500" height="16" /><path d="M15 1v16L5 9z" /></svg></Cell>
          <Cell><svg width="24" height="16" viewBox="0 0 24 16" fill={L}><path d="M7 0l7 8-7 8-7-8zM23 1v14l-7-7z" /></svg></Cell>
          <Cell><svg width="16" height="20" viewBox="0 0 16 20" fill={L}><path d="M15 0v20L1 10z" /></svg></Cell>
          <Cell><svg width="16" height="20" viewBox="0 0 16 20" fill={L}><path d="M1 0v20l14-10z" /></svg></Cell>
          <Cell><svg width="24" height="16" viewBox="0 0 24 16" fill={L}><path d="M17 0l7 8-7 8-7-8zM1 1v14l7-7z" /></svg></Cell>
          <Cell><svg width="16" height="18" viewBox="0 0 16 18" fill={L}><rect x="12.500" y="1" width="2.500" height="16" /><path d="M1 1v16l10-8z" /></svg></Cell>
        </div>
        <div className="ml-[243px] w-[114px] h-[30px] rounded-[5px] bg-[#545454] flex items-center justify-center text-[#e6e6e6]">1</div>
        <div className="ml-[8px] w-[301px] h-[30px] rounded-[5px] flex overflow-hidden bg-[#545454] text-[#e6e6e6]">
          <div className="w-[31px] bg-[#474747] flex items-center justify-center border-r border-[#3a3a3a]"><svg width="22" height="26" viewBox="0 0 22 26" fill="none" stroke={L} strokeWidth="1.500"><circle cx="11" cy="15" r="9.500" /><path d="M7 1.500h8M11 2v4M11 10v5h-3M18 7l3-3" /></svg></div>
          <div className="w-[138px] flex items-center pl-[24px] pr-[24px] justify-between border-r border-[#3d3d3d]"><span>Start</span><span>1</span></div>
          <div className="flex-1 flex items-center pl-[24px] pr-[21px] justify-between"><span>End</span><span>250</span></div>
        </div>
      </div>
      <div className="relative flex-1 bg-[#1d1d1d] overflow-hidden text-[#a8a8a8]">
        <div className="flex ml-[110px] pt-[8px] leading-[24px]">
          {nums.map((n) => <span key={n} className="w-[117.800px] text-center">{n}</span>)}
        </div>
        <div className="absolute left-[38px] top-[5px] w-[39px] h-[24px] rounded-t-[5px] bg-[#4772b3] flex justify-center text-white leading-[26px]">1</div>
        <div className="absolute left-[12px] right-[13px] top-[24px] h-[14px] rounded-full bg-[#575757] border border-[#2a2a2a]">
          <div className="absolute left-0 top-0 w-[11px] h-[12px] rounded-full bg-[#3a3a3a]" />
          <div className="absolute right-0 top-0 w-[11px] h-[12px] rounded-full bg-[#3a3a3a]" />
        </div>
        <div className="absolute left-[2px] top-[26px]"><ChevR c="#8a8a8a" s={12} /></div>
        <div className="absolute right-[3px] top-[26px] rotate-180"><ChevR c="#8a8a8a" s={12} /></div>
        <div className="absolute left-[55px] right-0 top-[38px] h-[4px] flex">
          {Array.from({ length: 26 }).map((_, i) => <div key={i} className="w-[58.900px] shrink-0 border-l border-[#4a4a4a]" />)}
        </div>
        <div className="absolute left-[58px] top-[36px] w-[2px] h-[6px] bg-[#4772b3]" />
      </div>
    </div>
  );
}

function Outliner() {
  return (
    <div className="relative h-[343px] shrink-0 rounded-[6px] overflow-hidden bg-[#282828]">
      <div className="h-[41px] bg-[#303030] flex items-center pl-[13px] pb-[1px] text-[#d6d6d6]">
        <div className={btn + ' w-[47px] justify-center gap-[1px]'}><OutlinerI /><Chev /></div>
        <div className={btn + ' ml-[9px] w-[48px] justify-center gap-[1px]'}><LayerI /><Chev /></div>
        <div className="ml-[26px] w-[200px] h-[30px] rounded-[5px] border border-[#3d3d3d] bg-[#1d1d1d] flex items-center pl-[6px] text-[#707070] shrink-0"><SearchI /><span className="ml-[8px]">Search</span></div>
      </div>
      <div className="flex flex-col text-[#d6d6d6]">
        <div className="h-[31px] bg-[#282828] flex items-center pl-[35px] pb-[1px]"><ArchiveI /><span className="ml-[9px]">Scene Collection</span></div>
        <div className="h-[30px] bg-[#2b2b2b] flex items-center pl-[39px]">
          <Chev c="#aaaaaa" />
          <div className="ml-[13px] w-[30px] h-[30px] rounded-[6px] bg-[#3f3f3f] flex items-center justify-center shrink-0"><ArchiveI /></div>
          <span className="ml-[8px]">Collection</span>
          <div className="ml-auto mr-[9px] w-[17px] h-[17px] rounded-[2px] bg-[#e6e6e6] flex items-center justify-center"><svg width="13" height="11" viewBox="0 0 13 11" fill="none" stroke="#222" strokeWidth="2.500"><path d="M1 6l4 4 7-9" /></svg></div>
          <div className="mr-[8px]"><EyeI /></div>
          <div className="mr-[20px]"><CamI /></div>
        </div>
        <div className="h-[30px] bg-[#334d80] flex items-center pl-[101px]">
          <MeshTri />
          <span className="ml-[7px] pt-[3px] text-[#f0a33a]">Cylinder</span>
          <div className="ml-auto mr-[8px]"><EyeI /></div>
          <div className="mr-[20px]"><CamI /></div>
        </div>
        {Array.from({ length: 7 }).map((_, i) => (
          <div key={i} className={'h-[30px] ' + (i % 2 ? 'bg-[#2b2b2b]' : 'bg-[#282828]')} />
        ))}
      </div>
      <div className="absolute left-[13px] bottom-[5px] w-[272px] h-[5px] rounded-full bg-[#3a3a3a]" />
    </div>
  );
}

const TabI = ({ children, active }: { children: React.ReactNode; active?: boolean }) => (
  <div className={'h-[41px] shrink-0 flex items-center justify-center ml-[5px] rounded-l-[6px] ' + (active ? 'bg-[#303030]' : '')}>{children}</div>
);

function Field({ label, value, round, lock = true }: { label: string; value: string; round?: string; lock?: boolean }) {
  return (
    <div className="h-[30px] flex items-center mb-[0.500px]">
      <span className="w-[88px] text-right text-[#d6d6d6] whitespace-nowrap">{label}</span>
      <div className={'ml-[15px] w-[81px] h-full bg-[#545454] flex items-center justify-center text-[#e6e6e6] tracking-[0.500px] ' + (round ?? '')}>{value}</div>
      <div className="ml-[5px]">{lock && <LockI />}</div>
      <div className="ml-[14px] w-[6px] h-[6px] rounded-full bg-[#dcdcdc]" />
    </div>
  );
}

const Panel = ({ name }: { name: string }) => (
  <div className="h-[38px] mt-[3px] shrink-0 rounded-[6px] bg-[#3d3d3d] flex items-center pl-[17px] pr-[13px] text-[#dcdcdc]">
    <ChevR s={16} /><span className="ml-[6px]">{name}</span><span className="ml-auto"><Dots /></span>
  </div>
);

function Properties() {
  const B1 = '#5680c2';
  return (
    <div className="mt-[4px] flex-1 min-h-0 rounded-[6px] overflow-hidden flex flex-col bg-[#303030] relative">
      <div className="h-[39px] shrink-0 bg-[#333333] flex items-center pl-[12px] text-[#707070]">
        <div className={btn + ' w-[49px] justify-center gap-[1px]'}>
          <svg width="26" height="24" viewBox="0 0 26 24"><rect x="1" y="1" width="24" height="10" rx="5" fill={L} /><rect x="1" y="13" width="24" height="10" rx="5" fill={L} /><circle cx="19" cy="6" r="3.500" fill="#282828" /><circle cx="7" cy="18" r="3.500" fill="#282828" /></svg>
          <Chev />
        </div>
        <div className="ml-[35px] w-[188px] shrink-0 h-[30px] rounded-[5px] border border-[#3d3d3d] bg-[#1d1d1d] flex items-center pl-[6px]"><SearchI /><span className="ml-[10px]">Search</span></div>
        <div className={btn + ' ml-[25px] w-[30px] pl-[8px]'}><Chev /></div>
      </div>
      <div className="flex flex-1 min-h-0">
        <div className="w-[46px] shrink-0 bg-[#1d1d1d] flex flex-col overflow-hidden">
          <div className="h-[14px] shrink-0" />
          <TabI><svg width="24" height="24" viewBox="0 0 24 24" fill="#d0d0d0"><path d="M5 1h1v11H5zM2 14h8v9H2z" /><path d="M15 1v5c0 2 1.500 3 2 3v13c0 1 3 1 3 0V9c.5 0 2-1 2-3V1l-2 3h-3z" /></svg></TabI>
          <div className="h-[13px] shrink-0 border-b border-[#2a2a2a]" />
          <TabI><svg width="24" height="22" viewBox="0 0 24 22" fill="#cfcfcf"><path d="M1 4h5l1-3h8l1 3h7v17H1z" /><path d="M4 9h12M4 12h12M4 15h12" stroke="#1d1d1d" strokeWidth="1.300" /><circle cx="20" cy="10" r="1.300" fill="#1d1d1d" /><circle cx="20" cy="15" r="1.300" fill="#1d1d1d" /></svg></TabI>
          <div className="h-[2px] shrink-0" />
          <TabI><svg width="24" height="24" viewBox="0 0 24 24" fill="#cfcfcf"><path d="M3 1h18c2 0 2 3 2 4v5h-3V7H4v3H1V5c0-1 0-4 2-4z" /><path d="M5 9h14v14H5z" /><path d="M7 20l4-5 3 3 2-1 2 3z" fill="#1d1d1d" /></svg></TabI>
          <div className="h-[2px] shrink-0" />
          <TabI><LayerI /></TabI>
          <div className="h-[2px] shrink-0" />
          <TabI><SceneI /></TabI>
          <div className="h-[3px] shrink-0" />
          <TabI><svg width="24" height="24" viewBox="0 0 24 24"><circle cx="12" cy="12" r="10.500" fill="#b0535e" /><path d="M6 6l4 1 2 4-3 2-2-3zM15 14l3-1-2 5z" fill="#1d1d1d" /><path d="M2 23l3-3M19 4l3-3" stroke="#b0535e" strokeWidth="1.500" /></svg></TabI>
          <div className="h-[14px] shrink-0 border-b border-[#2a2a2a]" />
          <TabI><ArchiveI /></TabI>
          <div className="h-[13px] shrink-0" />
          <TabI active><ObjI c="#e8a05c" b="#b8804c" /></TabI>
          <div className="h-[2px] shrink-0" />
          <TabI><svg width="24" height="24" viewBox="0 0 24 24" fill={B1}><path d="M23 6a7 7 0 0 1-9 7L5 22c-2 2-5-1-3-3l9-9a7 7 0 0 1 8-8l-4 4 1 3 3 1z" /></svg></TabI>
          <div className="h-[2px] shrink-0" />
          <TabI><svg width="24" height="24" viewBox="0 0 24 24" fill={B1} stroke={B1} strokeWidth="1.300"><circle cx="5" cy="5" r="3.500" /><circle cx="20" cy="5" r="2" /><circle cx="5" cy="21" r="2" /><circle cx="19" cy="19" r="3" /><path d="M5 5h15M5 5v16M5 5l14 14" /></svg></TabI>
          <div className="h-[2px] shrink-0" />
          <TabI><svg width="24" height="24" viewBox="0 0 24 24" fill="none"><circle cx="11" cy="13" r="4.500" fill={B1} /><circle cx="20" cy="4" r="3" fill={B1} /><path d="M16 4a10 10 0 1 0 6 13" stroke={B1} strokeWidth="1.500" /></svg></TabI>
          <div className="h-[2px] shrink-0" />
          <TabI><svg width="24" height="24" viewBox="0 0 24 24" fill="none" stroke={B1} strokeWidth="1.700"><path d="M2 13c0-3 3-5 5-7 3-2 10-5 14-5 2 1 2 4 1 7-2 5-6 14-12 14-5 0-8-4-8-9z" /><circle cx="10" cy="13" r="4" /><circle cx="10" cy="13" r="1.500" fill={B1} /></svg></TabI>
          <div className="h-[1px] shrink-0" />
          <TabI><svg width="24" height="24" viewBox="0 0 24 24" fill="none" stroke="#11b087" strokeWidth="1.800"><path d="M3.500 4h17L12 21z" /><rect x="1" y="1.500" width="5" height="5" fill="#1d1d1d" /><rect x="18" y="1.500" width="5" height="5" fill="#1d1d1d" /><rect x="9.500" y="18" width="5" height="5" fill="#1d1d1d" /></svg></TabI>
          <div className="h-[2px] shrink-0" />
          <TabI><svg width="24" height="24" viewBox="0 0 24 24"><circle cx="12" cy="12" r="11.500" fill="#b0535e" /><path d="M12 12c3 3 6 4 11.300 2-1 5-5 9-10.300 9.500-1-3.500-1-7.500-1-11.500z" fill="#1d1d1d" /></svg></TabI>
          <div className="h-[12px] shrink-0 border-b border-[#2a2a2a]" />
          <TabI><svg width="24" height="24" viewBox="0 0 24 24"><rect width="24" height="24" fill="#b0535e" />{[0, 1, 2, 3].flatMap((r) => [0, 1, 2, 3].map((c) => ((r + c) % 2 ? <rect key={`${r}${c}`} x={c * 6} y={r * 6} width="6" height="6" fill="#1d1d1d" /> : null)))}</svg></TabI>
        </div>
        <div className="flex-1 min-w-0 relative pl-[12px] flex flex-col overflow-hidden">
          <div className="h-[58px] shrink-0 flex items-center pl-[3px] text-[#e0e0e0]">
            <ObjI /><span className="ml-[15px]">Cylinder</span>
            <span className="ml-auto mr-[15px]"><PinI /></span>
          </div>
          <div className="mt-[12px] h-[31px] w-[258px] shrink-0 rounded-[5px] border border-[#3d3d3d] flex overflow-hidden bg-[#1d1d1d] text-[#e6e6e6]">
            <div className="w-[48px] h-full bg-[#282828] flex items-center justify-center gap-[1px] border-r border-[#404040]"><ObjI /><Chev /></div>
            <span className="ml-[12px] self-center">Cylinder</span>
          </div>
          <div className="mt-[17px] w-[260px] h-[436px] shrink-0 rounded-[6px] bg-[#3d3d3d]">
            <div className="h-[38px] flex items-center pl-[13px] pr-[13px] text-[#dcdcdc]">
              <svg width="16" height="10" viewBox="0 0 16 10" fill="none" stroke="#c4c4c4" strokeWidth="1.300"><path d="M1 1l7 7 7-7" /></svg>
              <span className="ml-[5px]">Transform</span><span className="ml-auto"><Dots /></span>
            </div>
            <div className="mt-[13px]">
              <Field label="Locati..." value="0 m" round="rounded-tl-[5px]" />
              <Field label="Y" value="0 m" />
              <Field label="Z" value="-3.9" round="rounded-bl-[5px]" />
            </div>
            <div className="mt-[10px]">
              <Field label="Rotatio..." value="0°" round="rounded-tl-[5px]" />
              <Field label="Y" value="0°" />
              <Field label="Z" value="0°" round="rounded-bl-[5px]" />
            </div>
            <div className="mt-[9.500px] h-[29px] flex items-center">
              <span className="w-[88px] text-right text-[#d6d6d6]">Mode</span>
              <div className="ml-[15px] w-[81px] h-full rounded-[5px] bg-[#282828] flex items-center pl-[11px] text-[#e0e0e0]">XYZ...<span className="ml-auto mr-[4px]"><Chev /></span></div>
              <div className="ml-[44px] w-[6px] h-[6px] rounded-full bg-[#dcdcdc]" />
            </div>
            <div className="mt-[10px]">
              <Field label="Scale X" value="0.97" round="rounded-tl-[5px]" />
              <Field label="Y" value="0.97" />
              <Field label="Z" value="4.06" round="rounded-bl-[5px]" />
            </div>
            <div className="mt-[25px] flex items-center pl-[36px] text-[#dcdcdc]"><ChevR s={16} /><span className="ml-[8px]">Delta Transform</span></div>
          </div>
          <div className="w-[260px] flex flex-col">
            <Panel name="Relations" />
            <Panel name="Collections" />
            <Panel name="Instancing" />
            <div className="h-[38px] mt-[3px] shrink-0 rounded-[6px] bg-[#3d3d3d]" />
          </div>
          <div className="absolute right-[4px] top-[15px] w-[6px] h-[520px] rounded-full bg-[#454545]" />
        </div>
      </div>
    </div>
  );
}

const Stat = ({ w, children, last }: { w: string; children: React.ReactNode; last?: boolean }) => (
  <div className={w + ' h-[24px] flex items-center tracking-[0.400px] ' + (last ? '' : 'border-r border-[#6a6a6a]')}>{children}</div>
);

function StatusBar() {
  return (
    <div className="h-[34px] shrink-0 bg-[#181818] flex items-center text-[#9a9a9a] pl-[20px] whitespace-nowrap">
      <Mouse k={0} /><span className="ml-[5px] w-[326px]">Select</span>
      <Mouse k={1} /><span className="ml-[5px] w-[326px]">Rotate View</span>
      <Mouse k={2} /><span className="ml-[5px]">Object</span>
      <div className="ml-auto mr-[22px] flex">
        <Stat w="w-[93px]">Collection</Stat>
        <Stat w="w-[87px] pl-[8px]">Cylinder</Stat>
        <Stat w="w-[87px] pl-[6px]">Verts:64</Stat>
        <Stat w="w-[95px] pl-[9px]">Faces:34</Stat>
        <Stat w="w-[88px] pl-[8px]">Tris:124</Stat>
        <Stat w="w-[114px] pl-[7px]">Objects:1/1</Stat>
        <Stat w="w-[52px] pl-[7px]" last>4.2.0</Stat>
      </div>
    </div>
  );
}

export default function App() {
  return (
    <div className="relative w-[1920px] h-[1199px] overflow-hidden bg-[#181818] flex flex-col text-[17.600px] leading-none [font-family:Inter,'Noto_Sans',sans-serif]">
      <TitleBar />
      <MenuBar />
      <div className="flex-1 min-h-0 flex pl-[3px] pr-[2px]">
        <div className="w-[1582px] shrink-0 flex flex-col">
          <Viewport />
          <Timeline />
        </div>
        <div className="ml-[2px] flex-1 min-w-0 flex flex-col">
          <Outliner />
          <Properties />
        </div>
      </div>
      <StatusBar />

      <div className="absolute left-[1349px] top-[177px] w-[338px] h-[155px] rounded-[7px] bg-[#181818] shadow-[0_2px_6px_#0006] text-[#9a9a9a]">
        <div className="absolute left-[152px] -top-[16px] w-0 h-0 border-l-[19px] border-r-[19px] border-b-[16px] border-l-transparent border-r-transparent border-b-[#181818]" />
        <div className="pl-[15px] pt-[21px]">Transform</div>
        <div className="mt-[14px] flex">
          <span className="w-[130px] text-right leading-[23px] text-[#a0a0a0]">Affect Only</span>
          <div className="ml-[15px] flex flex-col gap-[8px]">
            <div className="flex items-center"><div className="w-[23px] h-[23px] rounded-[4px] bg-[#4772b3] flex items-center justify-center"><svg width="14" height="13" viewBox="0 0 14 13" fill="none" stroke="#fff" strokeWidth="2.400"><path d="M1 7l4 4 8-10" /></svg></div><span className="ml-[4px] text-[#f0f0f0]">Origins</span></div>
            <div className="flex items-center"><div className="w-[23px] h-[23px] rounded-[4px] bg-[#545454]" /><span className="ml-[4px]">Locations</span></div>
            <div className="flex items-center"><div className="w-[23px] h-[23px] rounded-[4px] bg-[#545454]" /><span className="ml-[4px]">Parents</span></div>
          </div>
        </div>
      </div>

      <svg className="absolute inset-0 w-[1920px] h-[1199px] pointer-events-none drop-shadow-[1px_2px_2px_#00000066]" viewBox="0 0 1920 1199">
        <polygon points={arrow(930, 437, 91, 333, 11, 12, 30, 32)} fill="#fe4444" />
        <polygon points={arrow(1236, 336, 1475, 157, 12, 14, 34, 36)} fill="#fe4444" />
        <polygon points={arrow(1236, 381, 1498, 252, 12, 14, 34, 36)} fill="#fe4444" />
        <polygon points={arrow(965, 588, 807, 775, 16, 15, 34, 36)} fill="#fe4444" />
      </svg>

      <div className="absolute left-[922px] top-[318px] w-[320px] h-[274px] rounded-[3px] bg-[#fe4444] shadow-[1px_2px_4px_#00000066] flex items-center justify-center text-white text-center text-[30px] leading-[37px] [font-family:'Liberation_Sans',sans-serif]">
        <div className="w-[380px] shrink-0 scale-x-[0.875] -translate-x-[2px]">
          In the "Options"<br />dropdown, set "Affect<br />Only Origins". Then,<br />transformations such as<br />"Grab" will only move the<br />pivot point - not the<br />object itself.
        </div>
      </div>
    </div>
  );
}
